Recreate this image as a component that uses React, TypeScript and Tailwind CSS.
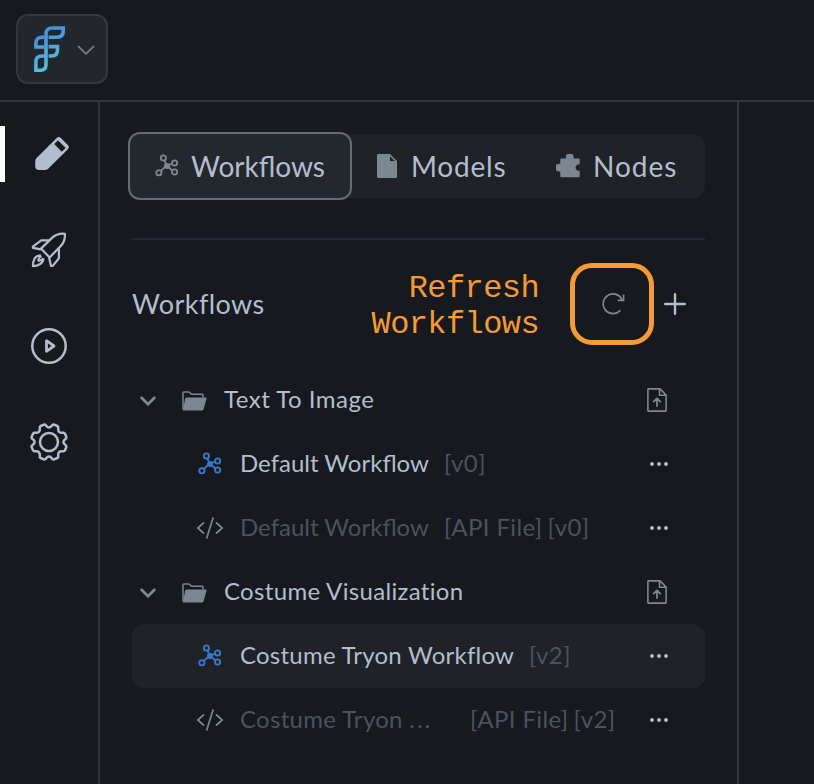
import type { ReactNode } from "react";

function Logo() {
  return (
    <svg width="32" height="48" viewBox="0 0 32 48" fill="none" stroke="url(#brand)" strokeWidth="3.6">
      <defs>
        <linearGradient id="brand" x1="4" y1="4" x2="24" y2="38" gradientUnits="userSpaceOnUse">
          <stop stopColor="#4088db" />
          <stop offset="1" stopColor="#56c0dc" />
        </linearGradient>
      </defs>
      <path d="M12 12V9Q12 3 18 3H29.2V6Q29.2 12.2 23 12.2H14.6" />
      <path d="M10.2 12.2H8.3Q1.9 12.2 1.9 18.5V22H10.4" />
      <path d="M14.6 21.6H23.5V25Q23.5 31 17.5 31H14.6" />
      <path d="M10.2 31H8Q1.9 31 1.9 37V45.2H6.5Q12 45.2 12 39.5V11" />
    </svg>
  );
}

function Graph({ className }: { className: string }) {
  return (
    <svg className={className} width="24" height="24" viewBox="0 0 24 24" fill="none" stroke="currentColor" strokeWidth="1.8">
      <circle cx="8.4" cy="3.9" r="2.6" />
      <circle cx="19.6" cy="9" r="2.6" />
      <circle cx="19.6" cy="18" r="2.6" />
      <circle cx="3.9" cy="18.8" r="2.6" />
      <path d="M9.4 6.3 11.6 11.5 17 9.8M11.6 11.5 17.4 16.5M11.6 11.5 5.9 16.8" />
      <circle cx="12" cy="11.9" r="3" fill="currentColor" stroke="none" />
    </svg>
  );
}

function Pencil() {
  return (
    <svg width="36" height="36" viewBox="0 0 36 36">
      <path d="M22.7 2.1a3 3 0 0 1 4.2 0l6.9 6.9a3 3 0 0 1 0 4.2L14.2 32.8a5 5 0 0 1-3.3 1.3H5.2a4 4 0 0 1-4-4v-4.7a5 5 0 0 1 1.4-3.5Z" fill="#b2becd" />
      <path d="M24 4.8 31.2 12 27.8 15.2 20.7 8.1Z" fill="#16191d" stroke="#16191d" strokeWidth="1" strokeLinejoin="round" />
    </svg>
  );
}

function Rocket() {
  return (
    <svg width="38" height="38" viewBox="0 0 38 38" fill="none" stroke="#b2becd" strokeWidth="2.2" strokeLinejoin="round">
      <path d="M11 17.6 22 6.9Q27.3 2 34.9 2.8 35.4 10.2 30.5 15.3L19.6 26.4Z" />
      <path d="M19.5 9.4H11.2L2.9 15.6V16.8L11 18.4" />
      <path d="M28.9 17V27.2L22.8 34.9H21L19 26.2" />
      <path d="M10.8 24.3Q6.5 24.3 4.4 27.9 2.9 30.8 2.9 35.1 7.2 35.1 10.2 33 13.2 31 13.6 27.4M11.2 24.6Q7.8 28.6 8.4 29.6 9.6 30.6 13.4 27.2" />
    </svg>
  );
}

function Play() {
  return (
    <svg width="38" height="38" viewBox="0 0 38 38" fill="none" stroke="#b2becd" strokeWidth="2.5">
      <circle cx="19" cy="19" r="16.7" />
      <path d="M16.5 13.7V24.3L24 19Z" strokeLinejoin="round" strokeWidth="2.8" />
    </svg>
  );
}

function Gear() {
  return (
    <svg width="40" height="40" viewBox="0 0 40 40" fill="none" stroke="#b2becd" strokeWidth="2.5" strokeLinejoin="round">
      <circle cx="20" cy="20" r="9" />
      <path d="M15 2.6Q16.5 2.3 17.2 3.8 20 7.4 22.8 3.8 23.5 2.3 25 2.6L28.3 4Q29.6 4.6 29.2 6.2 28.7 11.3 33.8 10.8 35.4 10.4 36 11.7L37.4 15Q37.7 16.5 36.2 17.2 32.6 20 36.2 22.8 37.7 23.5 37.4 25L36 28.3Q35.4 29.6 33.8 29.2 28.7 28.7 29.2 33.8 29.6 35.4 28.3 36L25 37.4Q23.5 37.7 22.8 36.2 20 32.6 17.2 36.2 16.5 37.7 15 37.4L11.7 36Q10.4 35.4 10.8 33.8 11.3 28.7 6.2 29.2 4.6 29.6 4 28.3L2.6 25Q2.3 23.5 3.8 22.8 7.4 20 3.8 17.2 2.3 16.5 2.6 15L4 11.7Q4.6 10.4 6.2 10.8 11.3 11.3 10.8 6.2 10.4 4.6 11.7 4Z" />
    </svg>
  );
}

function ModelFile() {
  return (
    <svg width="20" height="24" viewBox="0 0 20 24">
      <path d="M1.5 0H13L20 7V22.5A1.5 1.5 0 0 1 18.5 24H1.5A1.5 1.5 0 0 1 0 22.5V1.5A1.5 1.5 0 0 1 1.5 0Z" fill="#7c8792" />
      <path d="M13 2.2V7H17.8Z" fill="#1f2226" />
    </svg>
  );
}

function Puzzle() {
  return (
    <svg width="24" height="24" viewBox="0 0 24 24" fill="#7c8792">
      <path d="M5.5 4.5H10.2A3.9 3.9 0 1 1 17.4 4.5H22.5A1.2 1.2 0 0 1 23.7 5.7V10.5A3.2 3.2 0 1 0 23.7 16.6V22A1.2 1.2 0 0 1 22.5 23.2H5.5A1.2 1.2 0 0 1 4.3 22V17.3A3.9 3.9 0 1 1 4.3 10V5.7A1.2 1.2 0 0 1 5.5 4.5Z" />
    </svg>
  );
}

function Folder() {
  return (
    <svg width="25" height="20" viewBox="0 0 25 20">
      <path d="M1 18V1.7Q1 1 1.7 1H6.8L9.8 3.3H20.2Q21 3.3 21 4V6.5" fill="none" stroke="#7c8792" strokeWidth="1.5" />
      <path d="M4.3 6.4H23.8Q25 6.4 24.6 7.6L21.5 18.6Q21.2 19.4 20.4 19.4H.8L3.2 7.2Q3.4 6.4 4.3 6.4Z" fill="#7c8792" />
    </svg>
  );
}

function Upload() {
  return (
    <svg width="20" height="24" viewBox="0 0 20 24" fill="none" stroke="#7c8792" strokeWidth="1.6" strokeLinejoin="round">
      <path d="M.9 1.5Q.9.9 1.5.9H13L19.1 7V22.5Q19.1 23.1 18.5 23.1H1.5Q.9 23.1 .9 22.5ZM12.5 1V7.3H19" />
      <path d="M10 18.8V11M6.2 14.2 10 10.5 13.8 14.2" strokeWidth="1.8" />
    </svg>
  );
}

function Code() {
  return (
    <svg width="28" height="22" viewBox="0 0 28 22" fill="none" stroke="#7c8792" strokeWidth="1.7">
      <path d="M8 5.5 1.8 11 8 16.5M20 5.5 26.2 11 20 16.5M17.2.6 10.6 21.4" />
    </svg>
  );
}

function Dots() {
  return (
    <svg width="20" height="6" viewBox="0 0 20 6" fill="#b5c0ce">
      <circle cx="3" cy="3" r="1.9" />
      <circle cx="10" cy="3" r="1.9" />
      <circle cx="17" cy="3" r="1.9" />
    </svg>
  );
}

function FolderRow({ children, tracking }: { children: ReactNode; tracking: string }) {
  return (
    <div className="flex h-16 items-center">
      <svg className="mt-px ml-2" width="16" height="10" viewBox="0 0 16 10" fill="none" stroke="#7c8792" strokeWidth="2.7" strokeLinecap="round">
        <path d="M1.6 1.8 8 8.2 14.4 1.8" />
      </svg>
      <span className="mt-px ml-[26px]"><Folder /></span>
      <span className={"ml-[17px] pb-0.5 whitespace-nowrap " + tracking}>{children}</span>
      <span className="mr-[38px] ml-auto"><Upload /></span>
    </div>
  );
}

interface FileRowProps {
  name: ReactNode;
  version: string;
  api?: boolean;
  active?: boolean;
  nameClass: string;
}

function FileRow({ name, version, api, active, nameClass }: FileRowProps) {
  return (
    <div className={"flex h-16 items-center rounded-xl " + (active ? "bg-[#1f2226]" : "")}>
      <span className="ml-16 flex w-11 items-center">
        {api ? <Code /> : <Graph className="ml-0.5 text-[#3679d3]" />}
      </span>
      <span className={"pb-0.5 whitespace-nowrap " + nameClass + (api ? " text-[#4b525e]" : "")}>{name}</span>
      <span className="flex gap-[5px] pb-0.5 tracking-[0.4px] whitespace-nowrap text-[#4b525e]">
        {api && <span>[API File]</span>}
        <span>[{version}]</span>
      </span>
      <span className="mr-9 ml-auto"><Dots /></span>
    </div>
  );
}

export default function App() {
  return (
    <div className="flex h-[784px] w-[814px] flex-col overflow-hidden bg-[#16191d] font-['Lato',sans-serif] text-[24px] text-[#b2becd]">
      <header className="flex h-[102px] shrink-0 border-b-2 border-[#31353d] pt-3.5 pl-4">
        <button className="flex h-[70px] w-[92px] items-center rounded-xl border-2 border-[#34373d] bg-[#23262d] pl-4">
          <Logo />
          <svg className="ml-[11px] mt-px" width="18" height="10" viewBox="0 0 18 10" fill="none" stroke="#7c8490" strokeWidth="1.6">
            <path d="M1 1 9 8.8 17 1" />
          </svg>
        </button>
      </header>
      <div className="flex flex-1">
        <nav className="flex w-[100px] flex-col border-r-2 border-[#31353d]">
          <div className="flex h-[104px] items-center">
            <div className="h-14 w-[5px] bg-white" />
            <div className="ml-[29px]"><Pencil /></div>
          </div>
          <div className="flex h-[88px] items-center justify-center"><Rocket /></div>
          <div className="flex h-[104px] items-center justify-center"><Play /></div>
          <div className="flex h-[88px] items-center justify-center"><Gear /></div>
        </nav>
        <main className="flex w-[639px] flex-col border-r-2 border-[#31353d] pt-8 pr-8 pl-8">
          <div className="flex h-16 items-center rounded-xl bg-[#1f2226] text-[28px]">
            <div className="-ml-1 flex h-[68px] w-[224px] shrink-0 items-center rounded-xl border-2 border-[#636b77] bg-[#23272e] pl-[25px]">
              <Graph className="text-[#7c8792]" />
              <span className="ml-3">Workflows</span>
            </div>
            <div className="ml-[25px] flex w-[179px] shrink-0 items-center">
              <ModelFile />
              <span className="ml-3.5 tracking-[0.8px]">Models</span>
            </div>
            <div className="flex items-center">
              <Puzzle />
              <span className="ml-[13px] tracking-[1px]">Nodes</span>
            </div>
          </div>
          <div className="mt-10 h-0.5 shrink-0 bg-[#20273a]" />
          <div className="flex h-32 shrink-0 items-center">
            <h2 className="w-[200px] text-[27px] tracking-[0.4px]">Workflows</h2>
            <p className="w-[207px] pt-1.5 text-right font-['Liberation_Mono',monospace] text-[32px] leading-9 tracking-[-0.6px] text-[#f59a35]">
              Refresh
              <br />
              Workflows
            </p>
            <div className="ml-[31px] flex h-[82px] w-[84px] items-center justify-center rounded-[22px] border-5 border-[#f59a35]">
              <svg className="ml-0.5" width="24" height="24" viewBox="0 0 24 24" fill="none" stroke="#7c8792" strokeWidth="1.7">
                <path d="M19.4 18.2A9.8 9.8 0 1 1 21.3 8.6M22.6 2.4V8.4H16.6" />
              </svg>
            </div>
            <svg className="ml-2.5" width="22" height="22" viewBox="0 0 22 22" stroke="#b2becd" strokeWidth="2.4" strokeLinecap="round">
              <path d="M11 1.2V20.8M1.2 11H20.8" />
            </svg>
          </div>
          <FolderRow tracking="tracking-[0.5px]">Text To Image</FolderRow>
          <FileRow name="Default Workflow" version="v0" nameClass="w-[204px]" />
          <FileRow name="Default Workflow" version="v0" nameClass="w-[204px]" api />
          <FolderRow tracking="tracking-[0.33px]">Costume Visualization</FolderRow>
          <FileRow name="Costume Tryon Workflow" version="v2" nameClass="w-[289px] tracking-[0.23px]" active />
          <FileRow
            name={<>Costume Tryon <span className="tracking-[2px]">...</span></>}
            version="v2"
            nameClass="w-[230px] tracking-[0.3px]"
            api
          />
        </main>
      </div>
    </div>
  );
}
